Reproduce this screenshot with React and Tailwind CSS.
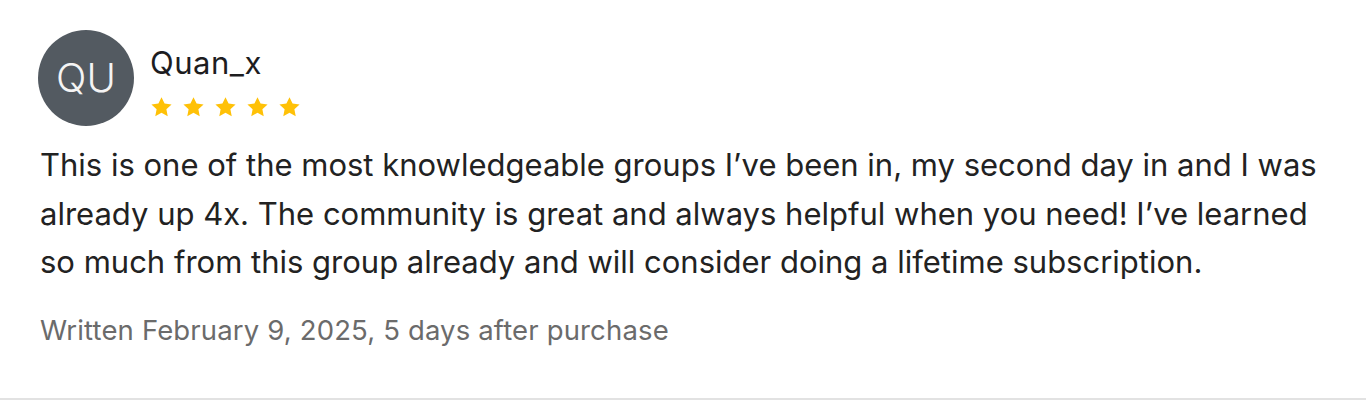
import React from 'react';

const Star = () => (
    <svg width="23" height="23" viewBox="0 0 24 24" className="shrink-0">
        <path d="M12 1.2l3.2 6.7 7.3.9-5.4 5 1.4 7.3L12 17.5l-6.5 3.6 1.4-7.3-5.4-5 7.3-.9z" fill="#FFC107" />
    </svg>
);

export default function App() {
    return (
        <div className="w-[1366px] h-[418px] bg-white font-['Inter',sans-serif] flex flex-col">
            <div className="px-[38px] pt-[30px] flex-1">
                {/* Header */}
                <div className="flex items-start gap-[16px]">
                    <div className="w-[96px] h-[96px] rounded-full bg-[#535a61] flex items-center justify-center text-[#f4f4f4] text-[40px] font-light">
                        QU
                    </div>
                    <div className="pt-[15px]">
                        <div className="text-[31px] text-[#1d1d1f] leading-[36px] tracking-[0.5px]">Quan_x</div>
                        <div className="flex gap-[9px] mt-[15px]">
                            {[0, 1, 2, 3, 4].map(i => <Star key={i} />)}
                        </div>
                    </div>
                </div>

                {/* Body */}
                <p className="mt-[15px] text-[31px] leading-[48.5px] text-[#222] pl-[2px] max-w-[1290px]">
                    This is one of the most knowledgeable groups I’ve been in, my second day in and I was already up 4x. The community is great and always helpful when you need! I’ve learned so much from this group already and will consider doing a lifetime subscription.
                </p>

                <p className="mt-[26px] pl-[2px] text-[27.5px] leading-[34px] tracking-[0.15px] text-[#6b6b6b]">
                    Written February 9, 2025, 5 days after purchase
                </p>
            </div>
            <div className="h-[2px] bg-[#e2e2e2] mb-[18px]" />
        </div>
    );
}
